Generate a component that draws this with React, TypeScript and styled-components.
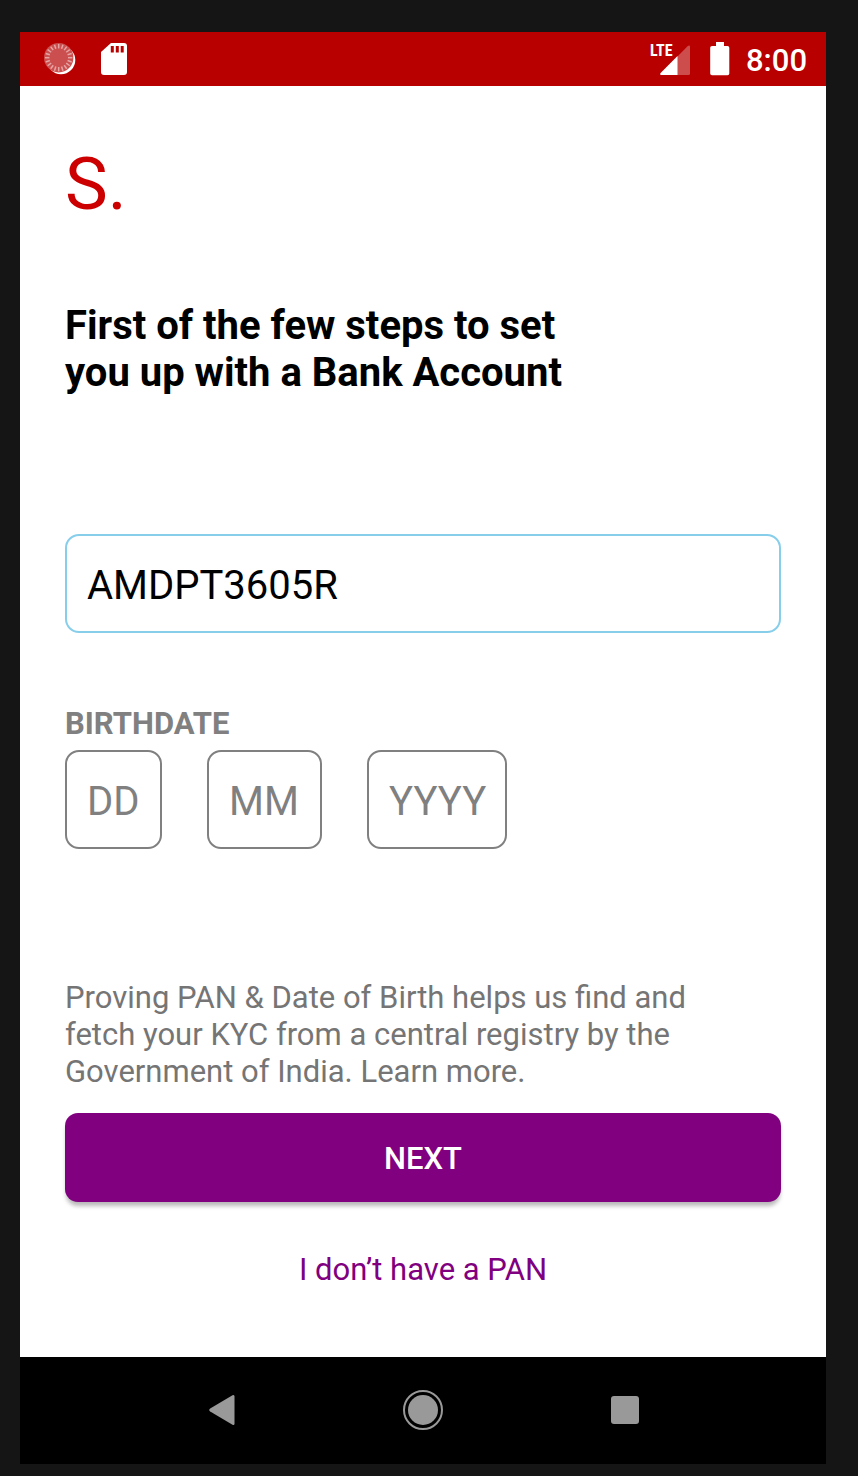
import React, { useState } from 'react';
import styled, { createGlobalStyle } from 'styled-components';

const GlobalStyle = createGlobalStyle`
  *, *::before, *::after {
    box-sizing: border-box;
  }

  body {
    margin: 0;
    background: #151515;
    font-family: Roboto, 'Liberation Sans', sans-serif;
  }
`;

const Backdrop = styled.div`
  display: flex;
  min-height: 100vh;
  padding: 32px 32px 12px 20px;
`;

const Phone = styled.div`
  display: flex;
  flex: 1;
  flex-direction: column;
  min-width: 0;
  background: #ffffff;
`;

const StatusBar = styled.header`
  display: flex;
  align-items: center;
  justify-content: space-between;
  height: 54px;
  padding: 0 19px 0 23px;
  background: #b80000;
  color: #ffffff;
`;

const StatusGroup = styled.div<{ $gap: number }>`
  display: flex;
  align-items: center;
  gap: ${({ $gap }) => $gap}px;
`;

const Clock = styled.time`
  padding-top: 2px;
  font-size: 31px;
  font-weight: 500;
  line-height: 37px;
`;

const NetworkLabel = styled.text`
  font-family: 'Roboto Condensed', 'Liberation Sans Narrow', 'Liberation Sans', sans-serif;
  font-size: 16px;
  font-weight: 700;
  fill: #ffffff;
`;

const Screen = styled.main`
  display: flex;
  flex: 1;
  flex-direction: column;
  padding: 57px 45px 69px;
`;

const Logo = styled.div`
  color: #cc0000;
  font-size: 72px;
  line-height: 84px;
`;

const Title = styled.h1`
  max-width: 520px;
  margin: 75px 0 0;
  color: #000000;
  font-size: 40px;
  font-weight: 700;
  line-height: 47px;
`;

const Form = styled.form`
  display: flex;
  flex: 1;
  flex-direction: column;
  margin-top: 138px;
`;

const Field = styled.input<{ $tone: string; $width?: number }>`
  width: ${({ $width }) => ($width ? `${$width}px` : '100%')};
  height: 99px;
  padding: 4px 0 0 20px;
  border: 2px solid ${({ $tone }) => $tone};
  border-radius: 14px;
  outline: none;
  background: #ffffff;
  color: #000000;
  font-family: inherit;
  font-size: 40px;

  &::placeholder {
    color: #808080;
    opacity: 1;
  }
`;

const DateGroup = styled.fieldset`
  min-width: 0;
  margin: 72px 0 0;
  padding: 0;
  border: 0;
`;

const DateLegend = styled.legend`
  padding: 0 0 8px;
  color: #808080;
  font-size: 31px;
  font-weight: 700;
  line-height: 37px;
`;

const DateRow = styled.div`
  display: flex;
  gap: 45px;
`;

const Footer = styled.div`
  display: flex;
  flex-direction: column;
  margin-top: auto;
`;

const Hint = styled.p`
  max-width: 660px;
  margin: 0;
  color: #757575;
  font-size: 31px;
  line-height: 37px;
`;

const HintLink = styled.a`
  color: inherit;
  text-decoration: none;
`;

const NextButton = styled.button`
  height: 89px;
  margin-top: 23px;
  padding: 2px 0 0;
  border: 0;
  border-radius: 13px;
  background: #800080;
  box-shadow: 0 5px 4px -1px rgba(0, 0, 0, 0.28);
  color: #ffffff;
  cursor: pointer;
  font-family: inherit;
  font-size: 31px;
  font-weight: 500;
  line-height: 37px;
`;

const NoPanLink = styled.a`
  align-self: center;
  margin-top: 49px;
  color: #800080;
  font-size: 31px;
  line-height: 37px;
  text-decoration: none;
`;

const NavBar = styled.nav`
  display: grid;
  grid-template-columns: repeat(3, 1fr);
  height: 107px;
  padding: 0 12.5% 2px;
  background: #000000;
`;

const NavButton = styled.button`
  display: flex;
  align-items: center;
  justify-content: center;
  padding: 0;
  border: 0;
  background: none;
  cursor: pointer;
`;

const TICKS = Array.from({ length: 20 }, (_, i) => i * 18);

function SyncIcon() {
  return (
    <svg width="34" height="34" viewBox="0 0 34 34" aria-hidden="true">
      <circle cx="18" cy="18" r="14.3" fill="#ffffff" />
      <circle cx="15.7" cy="15.700" r="14.700" fill="#cc4f4f" />
      {TICKS.map((angle) => (
        <path
          key={angle}
          d="M15.7 2v4.4"
          stroke="#e5a5a5"
          strokeWidth="1.5"
          transform={`rotate(${angle} 15.7 15.7)`}
        />
      ))}
    </svg>
  );
}

function SdCardIcon() {
  return (
    <svg width="26" height="34" viewBox="0 0 26 34" aria-hidden="true">
      <path d="M10 1h13a3 3 0 0 1 3 3v26a3 3 0 0 1-3 3H3a3 3 0 0 1-3-3V10z" fill="#ffffff" />
      <path d="M9.8 4h3v6.4h-3zM14.8 4h3v6.4h-3zM19.7 4h3v6.4h-3z" fill="#b80000" />
    </svg>
  );
}

function SignalIcon() {
  return (
    <svg width="40" height="34" viewBox="0 0 40 34" role="img" aria-label="LTE signal">
      <path d="M27 15 37.3 4.6Q40 2.4 40 5v26.5q0 1.5-1.5 1.5H27z" fill="#ffffff" fillOpacity="0.3" />
      <path d="M27.5 14v19H11q-1.8-.6-.4-2z" fill="#ffffff" />
      <NetworkLabel x="0" y="14">LTE</NetworkLabel>
    </svg>
  );
}

function BatteryIcon() {
  return (
    <svg width="20" height="34" viewBox="0 0 20 34" aria-hidden="true">
      <path
        d="M6 0h8v4h3.5Q19.3 4 19.3 5.8V31.5q0 1.8-1.8 1.8H2Q.2 33.3.2 31.5V5.8Q.2 4 2 4h4z"
        fill="#ffffff"
      />
    </svg>
  );
}

export default function App() {
  const [pan, setPan] = useState('AMDPT3605R');

  return (
    <>
      <GlobalStyle />
      <Backdrop>
        <Phone>
          <StatusBar>
            <StatusGroup $gap={24}>
              <SyncIcon />
              <SdCardIcon />
            </StatusGroup>
            <StatusGroup $gap={16}>
              <StatusGroup $gap={20}>
                <SignalIcon />
                <BatteryIcon />
              </StatusGroup>
              <Clock>8:00</Clock>
            </StatusGroup>
          </StatusBar>

          <Screen>
            <Logo>S.</Logo>
            <Title>First of the few steps to set you up with a Bank Account</Title>
            <Form onSubmit={(event) => event.preventDefault()}>
              <Field
                $tone="#87ceeb"
                type="text"
                aria-label="PAN"
                value={pan}
                onChange={(event) => setPan(event.target.value)}
              />
              <DateGroup>
                <DateLegend>BIRTHDATE</DateLegend>
                <DateRow>
                  <Field $tone="#808080" $width={97} type="text" inputMode="numeric" aria-label="Day" placeholder="DD" maxLength={2} />
                  <Field $tone="#808080" $width={115} type="text" inputMode="numeric" aria-label="Month" placeholder="MM" maxLength={2} />
                  <Field $tone="#808080" $width={140} type="text" inputMode="numeric" aria-label="Year" placeholder="YYYY" maxLength={4} />
                </DateRow>
              </DateGroup>
              <Footer>
                <Hint>
                  Proving PAN &amp; Date of Birth helps us find and fetch your KYC from a central
                  registry by the Government of India. <HintLink href="#learn-more">Learn more.</HintLink>
                </Hint>
                <NextButton type="submit">NEXT</NextButton>
                <NoPanLink href="#no-pan">I don’t have a PAN</NoPanLink>
              </Footer>
            </Form>
          </Screen>

          <NavBar aria-label="System navigation">
            <NavButton type="button" aria-label="Back">
              <svg width="26" height="32" viewBox="0 0 26 32" aria-hidden="true">
                <path d="M23.5 1.2Q25.5.3 25.5 2.5v27q0 2.2-2 1.3L1.2 17.4Q-.8 16 1.2 14.6z" fill="#999999" />
              </svg>
            </NavButton>
            <NavButton type="button" aria-label="Home">
              <svg width="40" height="40" viewBox="0 0 40 40" aria-hidden="true">
                <circle cx="20" cy="20" r="19" fill="none" stroke="#999999" strokeWidth="2" />
                <circle cx="20" cy="20" r="15" fill="#999999" />
              </svg>
            </NavButton>
            <NavButton type="button" aria-label="Recent apps">
              <svg width="28" height="28" viewBox="0 0 28 28" aria-hidden="true">
                <rect width="28" height="28" rx="3" fill="#999999" />
              </svg>
            </NavButton>
          </NavBar>
        </Phone>
      </Backdrop>
    </>
  );
}
